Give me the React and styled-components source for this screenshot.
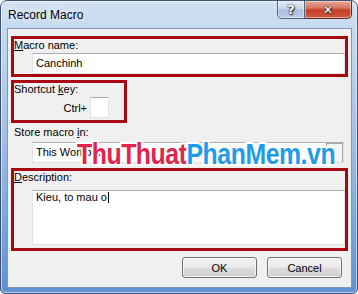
import React from "react";
import styled, { createGlobalStyle } from "styled-components";

const GlobalStyle = createGlobalStyle`
  html, body { margin: 0; padding: 0; background: #ffffff; }
  body { font-family: "Liberation Sans", Arial, sans-serif; }
  * { box-sizing: border-box; }
`;

const Window = styled.div`
  position: relative;
  width: 358px;
  height: 294px;
  border: 1px solid #3f5474;
  border-radius: 7px 7px 5px 5px;
  padding: 0 5px 5px 6px;
  display: flex;
  flex-direction: column;
  background: linear-gradient(180deg, #d3e2f4 0px, #c6d9f0 28px, #a9c4e8 120px, #7ea6dc 220px, #5f8fd2 294px);
  box-shadow: inset 0 0 0 1px rgba(255, 255, 255, 0.55);
  overflow: hidden;
`;

const TitleBar = styled.div`
  height: 27px;
  display: flex;
  justify-content: space-between;
  align-items: flex-start;
  flex: none;
`;

const Title = styled.div`
  padding: 7px 0 0 1px;
  font-size: 12px;
  line-height: 14px;
  color: #000;
  text-shadow: 0 0 6px rgba(255, 255, 255, 0.9);
`;

const Caption = styled.div`
  display: flex;
`;

const CapButton = styled.div`
  height: 18px;
  width: ${(p) => (p.$kind === "close" ? "47px" : "28px")};
  border: 1px solid ${(p) => (p.$kind === "close" ? "#5b2a22" : "#4f6584")};
  border-top: none;
  border-left-width: ${(p) => (p.$kind === "close" ? "0" : "1px")};
  border-radius: ${(p) => (p.$kind === "close" ? "0 0 5px 0" : "0 0 0 5px")};
  background: ${(p) =>
    p.$kind === "close"
      ? "linear-gradient(180deg, #e3a797 0%, #d77761 40%, #c53f25 55%, #cf5a3f 100%)"
      : "linear-gradient(180deg, #e3ebf5 0%, #c5d5ea 45%, #a9bfdd 55%, #bccfe9 100%)"};
  box-shadow: inset 0 0 0 1px rgba(255, 255, 255, 0.45);
  display: flex;
  align-items: center;
  justify-content: center;
  color: #fff;
  font-family: "DejaVu Sans", "Liberation Sans", sans-serif;
  font-weight: bold;
  font-size: ${(p) => (p.$kind === "close" ? "12px" : "13px")};
  text-shadow: 0 0 1px #222, 0 0 2px #333, 1px 1px 1px #333;
`;

const Client = styled.div`
  flex: 1;
  border: 1px solid #8396b2;
  background: #f0f0f0;
  padding: 7px 3px 0 3px;
  display: flex;
  flex-direction: column;
  font-size: 11px;
  color: #000;
`;

const Group = styled.div`
  border: 3px solid ${(p) => (p.$marked ? "#a80910" : "transparent")};
  width: ${(p) => p.$width || "auto"};
  margin-top: ${(p) => p.$gap || 0}px;
  display: flex;
  flex-direction: column;
  padding-bottom: ${(p) => p.$pb || 0}px;
`;

const Label = styled.div`
  height: 14px;
  line-height: 12px;
  padding-bottom: 2px;
  white-space: nowrap;
`;

const Mn = styled.span`
  text-decoration: underline;
`;

const Field = styled.div`
  margin-left: 18px;
  margin-top: ${(p) => p.$gap || 0}px;
  margin-right: ${(p) => (p.$combo ? 1 : 0)}px;
  height: ${(p) => p.$h || 21}px;
  background: #fff;
  border: 1px solid #e2e3ea;
  border-top-color: #abadb3;
  padding: 0 3px;
  line-height: ${(p) => (p.$multi ? "12px" : "19px")};
  white-space: nowrap;
  position: relative;
  display: flex;
  align-items: ${(p) => (p.$multi ? "flex-start" : "center")};
`;

const Caret = styled.span`
  display: inline-block;
  width: 1px;
  height: 11px;
  background: #000;
  margin-left: 1px;
  margin-top: 1px;
`;

const KeyRow = styled.div`
  display: flex;
  align-items: center;
  justify-content: flex-end;
  gap: 3px;
  padding-right: 15px;
  height: 21px;
  margin-bottom: 2px;
`;

const KeyBox = styled.div`
  width: 19px;
  height: 21px;
  background: #fff;
  border: 1px solid #e2e3ea;
  border-top-color: #abadb3;
`;

const ComboArrow = styled.div`
  position: absolute;
  right: 0;
  top: 0;
  width: 17px;
  height: 19px;
  border-left: 1px solid #a5a5a5;
  border-top: 1px solid #a5a5a5;
  border-right: 1px solid #a5a5a5;
  background: #f4f4f4;
`;

const ButtonRow = styled.div`
  display: flex;
  justify-content: flex-end;
  gap: 10px;
  margin-top: 6px;
  padding-right: 6px;
`;

const Button = styled.div`
  width: 75px;
  height: 21px;
  border: 1px solid #707070;
  border-radius: 3px;
  background: linear-gradient(180deg, #f2f2f2 0%, #ebebeb 48%, #dddddd 52%, #cfcfcf 100%);
  box-shadow: inset 0 0 0 1px rgba(255, 255, 255, 0.7);
  display: flex;
  align-items: center;
  justify-content: center;
  font-size: 11px;
  color: #000;
`;

const Watermark = styled.div`
  position: absolute;
  left: 76px;
  top: 136px;
  font-family: "Liberation Sans", Arial, sans-serif;
  font-weight: bold;
  font-size: 29px;
  line-height: 34px;
  letter-spacing: -0.5px;
  white-space: nowrap;
  transform-origin: left top;
  transform: scaleX(0.855);
  -webkit-text-stroke: 4px #ffffff;
  paint-order: stroke fill;
  pointer-events: none;
`;

const Mark = styled.span`
  color: ${(p) => p.$c};
`;

export default function App() {
  return (
    <>
      <GlobalStyle />
      <Window>
        <TitleBar>
          <Title>Record Macro</Title>
          <Caption>
            <CapButton $kind="help">?</CapButton>
            <CapButton $kind="close">✕</CapButton>
          </Caption>
        </TitleBar>
        <Client>
          <Group $marked>
            <Label>
              <Mn>M</Mn>acro name:
            </Label>
            <Field>Canchinh</Field>
          </Group>
          <Group $marked $width="116px" $gap={3}>
            <Label>
              Shortcut <Mn>k</Mn>ey:
            </Label>
            <KeyRow>
              <span>Ctrl+</span>
              <KeyBox />
            </KeyRow>
          </Group>
          <Group>
            <Label>
              Store macro <Mn>i</Mn>n:
            </Label>
            <Field $gap={2} $combo>
              This Workbook
              <ComboArrow />
            </Field>
          </Group>
          <Group $marked $gap={2} $pb={3}>
            <Label>
              <Mn>D</Mn>escription:
            </Label>
            <Field $gap={5} $h={55} $multi>
              Kieu, to mau o
              <Caret />
            </Field>
          </Group>
          <ButtonRow>
            <Button>OK</Button>
            <Button>Cancel</Button>
          </ButtonRow>
        </Client>
        <Watermark>
          <Mark $c="#e2234c">ThuThuat</Mark>
          <Mark $c="#1f9ce9">PhanMem.vn</Mark>
        </Watermark>
      </Window>
    </>
  );
}
